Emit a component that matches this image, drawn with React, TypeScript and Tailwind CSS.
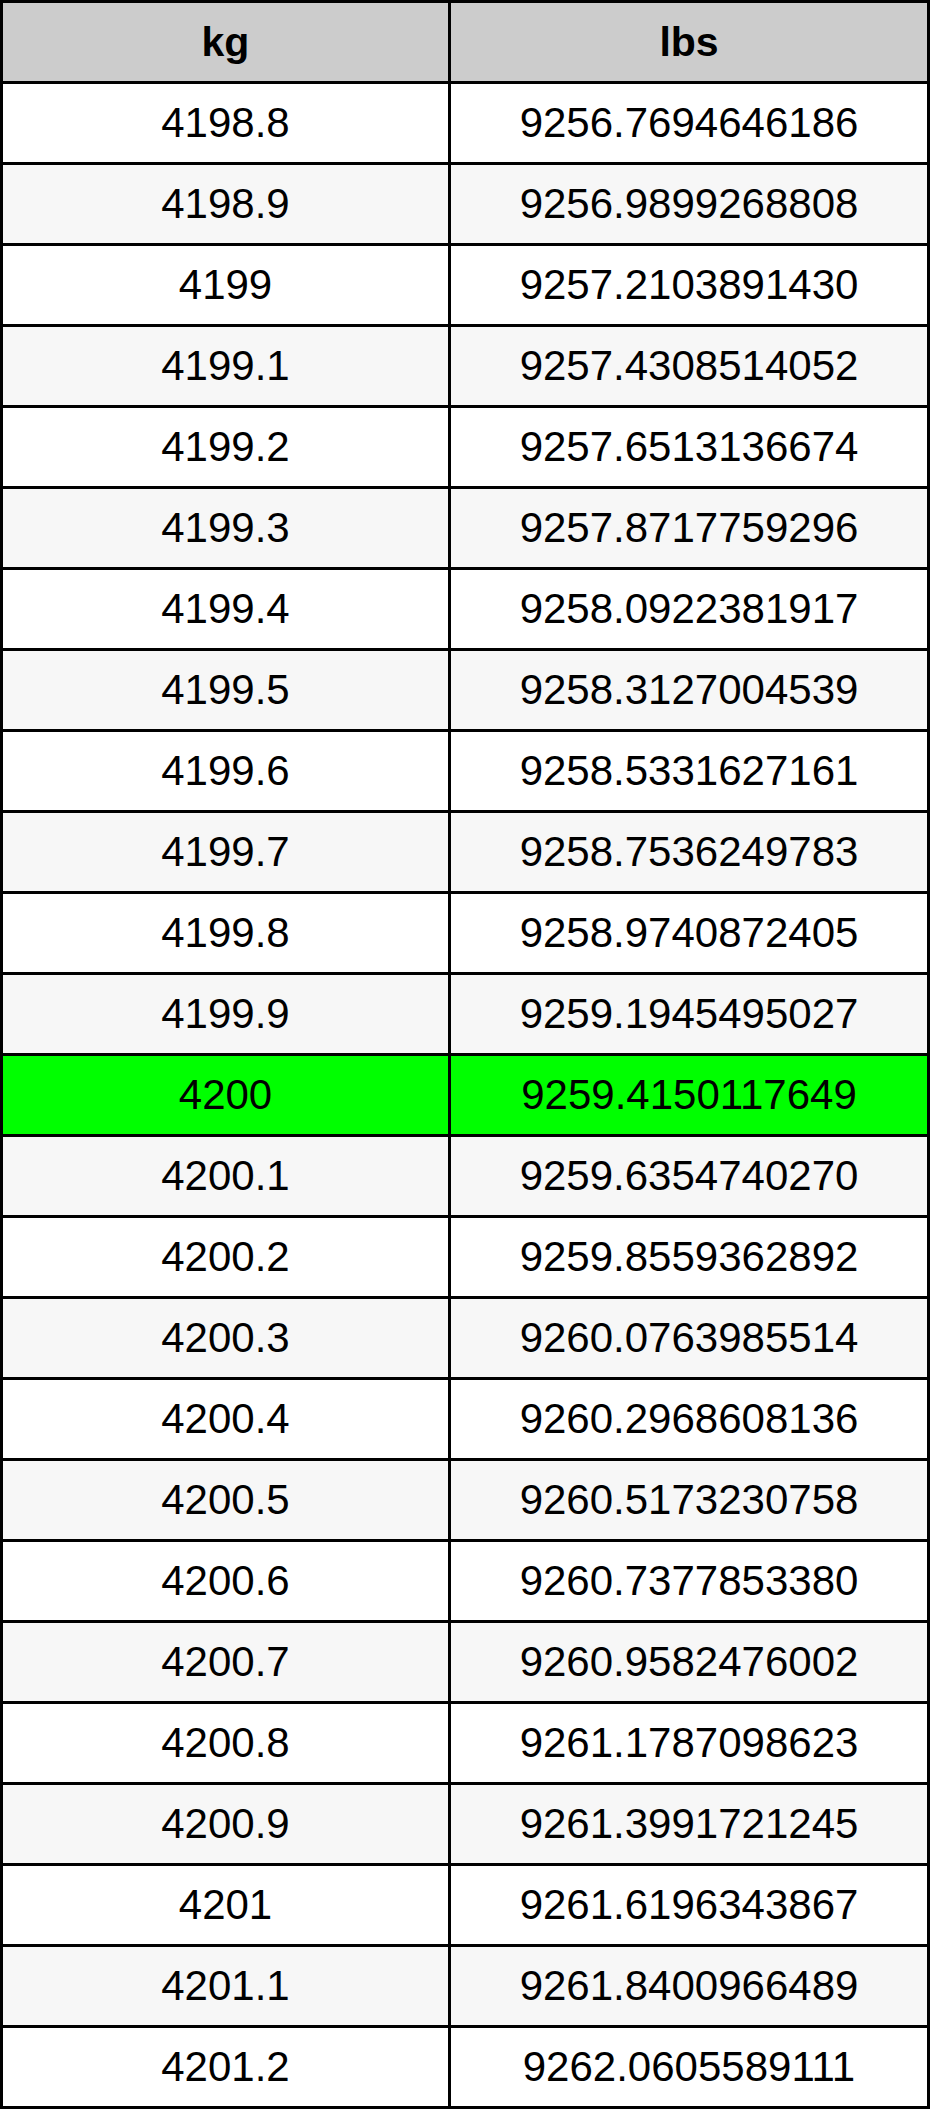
import React from 'react';

const rows: [string, string][] = [
  ['4198.8', '9256.7694646186'],
  ['4198.9', '9256.9899268808'],
  ['4199', '9257.2103891430'],
  ['4199.1', '9257.4308514052'],
  ['4199.2', '9257.6513136674'],
  ['4199.3', '9257.8717759296'],
  ['4199.4', '9258.0922381917'],
  ['4199.5', '9258.3127004539'],
  ['4199.6', '9258.5331627161'],
  ['4199.7', '9258.7536249783'],
  ['4199.8', '9258.9740872405'],
  ['4199.9', '9259.1945495027'],
  ['4200', '9259.4150117649'],
  ['4200.1', '9259.6354740270'],
  ['4200.2', '9259.8559362892'],
  ['4200.3', '9260.0763985514'],
  ['4200.4', '9260.2968608136'],
  ['4200.5', '9260.5173230758'],
  ['4200.6', '9260.7377853380'],
  ['4200.7', '9260.9582476002'],
  ['4200.8', '9261.1787098623'],
  ['4200.9', '9261.3991721245'],
  ['4201', '9261.6196343867'],
  ['4201.1', '9261.8400966489'],
  ['4201.2', '9262.0605589111'],
];

const cell = 'h-[78px] flex items-center justify-center';

export default function App() {
  return (
    <div className="bg-white w-[930px]" style={{ fontFamily: '"Liberation Sans", Arial, sans-serif' }}>
      <div className="grid grid-cols-[445px_476px] gap-[3px] bg-black p-[3px] text-[42px] leading-none text-black">
        <div className={`${cell} bg-[#cccccc] font-bold text-[41px]`}>kg</div>
        <div className={`${cell} bg-[#cccccc] font-bold text-[41px]`}>lbs</div>
        {rows.map(([kg, lbs], i) => {
          const bg = kg === '4200' ? 'bg-[#00ff00]' : i % 2 === 1 ? 'bg-[#f7f7f7]' : 'bg-white';
          return (
            <React.Fragment key={kg}>
              <div className={`${cell} ${bg}`}>{kg}</div>
              <div className={`${cell} ${bg}`}>{lbs}</div>
            </React.Fragment>
          );
        })}
      </div>
    </div>
  );
}
